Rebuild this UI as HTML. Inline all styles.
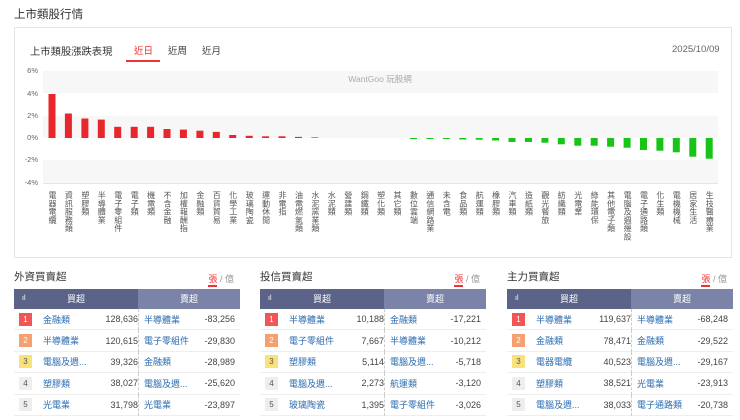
<!DOCTYPE html>
<html><head><meta charset="utf-8">
<style>
*{margin:0;padding:0;box-sizing:border-box}
body{width:740px;height:420px;background:#fff;font-family:"Liberation Sans","Noto Sans CJK TC",sans-serif;position:relative;overflow:hidden;color:#333}
.abs{position:absolute}
.title{left:14px;top:6px;font-size:11.5px;color:#333}
.card{left:14px;top:27px;width:718px;height:231px;border:1px solid #e4e4e4}
.lbl{position:absolute;top:191px;writing-mode:vertical-rl;font-size:8px;line-height:8px;color:#555;letter-spacing:0.3px;transform:translateX(-4px)}
.yl{position:absolute;left:22px;font-size:7.5px;color:#666;width:16px;text-align:right}
.tbl{position:absolute;top:269px;width:226px}
.tbl .h{font-size:10.5px;color:#333;height:19px;position:relative}
.tbl .u{position:absolute;right:6px;top:3px;font-size:9px;color:#999}
.tbl .u b{font-weight:normal;color:#e33;border-bottom:2px solid #e33;padding-bottom:1px}
.hd{height:20px;display:flex;font-size:9px;color:#fff;margin-top:1px}
.hd .a{width:124px;background:#5b6488;position:relative;text-align:center;line-height:20px}
.hd .b{flex:1;background:#7b84a8;text-align:center;line-height:20px}
.row{height:21.4px;display:flex;align-items:center;border-bottom:1px solid #eee;font-size:9px;position:relative}
.bd{width:13px;height:13px;margin-left:5px;font-size:8px;text-align:center;line-height:13px;color:#fff}
.n{color:#2a6bb0;position:absolute;left:29px}
.v{position:absolute;right:102px;color:#444}
.n2{color:#2a6bb0;position:absolute;left:130px}
.v2{position:absolute;right:5px;color:#444}
.row:after{content:"";position:absolute;left:124px;top:0;bottom:-1px;border-left:1px dashed #ccc}
</style></head><body>
<div class="abs title">上市類股行情</div>
<div class="abs card"></div>
<div class="abs" style="left:30px;top:43px;font-size:10.3px;color:#333">上市類股漲跌表現</div>
<div class="abs" style="left:134px;top:43px;font-size:9.5px;color:#e33">近日</div>
<div class="abs" style="left:126px;top:60px;width:34px;height:2px;background:#e33"></div>
<div class="abs" style="left:168px;top:43px;font-size:9.5px;color:#444">近周</div>
<div class="abs" style="left:202px;top:43px;font-size:9.5px;color:#444">近月</div>
<div class="abs" style="left:672px;top:44px;font-size:9.5px;color:#666">2025/10/09</div>
<div class="yl" style="top:66px">6%</div>
<div class="yl" style="top:89px">4%</div>
<div class="yl" style="top:111px">2%</div>
<div class="yl" style="top:133px">0%</div>
<div class="yl" style="top:155px">-2%</div>
<div class="yl" style="top:178px">-4%</div>
<svg class="abs" style="left:0;top:0" width="740" height="200">
<rect x="43" y="71" width="675" height="22" fill="#f7f7f7"/>
<rect x="43" y="116" width="675" height="22" fill="#f7f7f7"/>
<rect x="43" y="160" width="675" height="23" fill="#f7f7f7"/>
<line x1="43" y1="183.5" x2="718" y2="183.5" stroke="#e6e6e6"/>
<text x="380" y="82" font-size="8.5" fill="#aaa" text-anchor="middle" font-family="Liberation Sans,Noto Sans CJK TC,sans-serif">WantGoo 玩股網</text>
<g fill="#e8262b">
<rect x="48.5" y="94" width="7" height="44"/>
<rect x="64.9" y="113.5" width="7" height="24.5"/>
<rect x="81.4" y="118.5" width="7" height="19.5"/>
<rect x="97.8" y="119.6" width="7" height="18.4"/>
<rect x="114.2" y="126.8" width="7" height="11.2"/>
<rect x="130.7" y="126.8" width="7" height="11.2"/>
<rect x="147.1" y="126.8" width="7" height="11.2"/>
<rect x="163.5" y="129" width="7" height="9"/>
<rect x="179.9" y="129.6" width="7" height="8.4"/>
<rect x="196.4" y="130.7" width="7" height="7.3"/>
<rect x="212.8" y="131.9" width="7" height="6.1"/>
<rect x="229.2" y="135" width="7" height="3"/>
<rect x="245.7" y="135.8" width="7" height="2.2"/>
<rect x="262.1" y="136.3" width="7" height="1.7"/>
<rect x="278.5" y="136.3" width="7" height="1.7"/>
<rect x="295" y="136.9" width="7" height="1.1"/>
<rect x="311.4" y="137.4" width="7" height="0.6"/>
</g>
<g fill="#18c418">
<rect x="410" y="138" width="7" height="1"/>
<rect x="426.4" y="138" width="7" height="1"/>
<rect x="442.8" y="138" width="7" height="1"/>
<rect x="459.3" y="138" width="7" height="1.5"/>
<rect x="475.7" y="138" width="7" height="1.7"/>
<rect x="492.1" y="138" width="7" height="2.5"/>
<rect x="508.5" y="138" width="7" height="4"/>
<rect x="525" y="138" width="7" height="4"/>
<rect x="541.4" y="138" width="7" height="4.7"/>
<rect x="557.8" y="138" width="7" height="6.3"/>
<rect x="574.3" y="138" width="7" height="7.7"/>
<rect x="590.7" y="138" width="7" height="7.7"/>
<rect x="607.1" y="138" width="7" height="8.7"/>
<rect x="623.6" y="138" width="7" height="9.7"/>
<rect x="640" y="138" width="7" height="12"/>
<rect x="656.4" y="138" width="7" height="12.7"/>
<rect x="672.8" y="138" width="7" height="14.3"/>
<rect x="689.3" y="138" width="7" height="18.7"/>
<rect x="705.7" y="138" width="7" height="20.7"/>
</g>
</svg>
<div class="lbl" style="left:52px">電器電纜</div>
<div class="lbl" style="left:68.4px">資訊服務類</div>
<div class="lbl" style="left:84.9px">塑膠類</div>
<div class="lbl" style="left:101.3px">半導體業</div>
<div class="lbl" style="left:117.7px">電子零組件</div>
<div class="lbl" style="left:134.2px">電子類</div>
<div class="lbl" style="left:150.6px">機電類</div>
<div class="lbl" style="left:167px">不含金融</div>
<div class="lbl" style="left:183.4px">加權報酬指</div>
<div class="lbl" style="left:199.9px">金融類</div>
<div class="lbl" style="left:216.3px">百貨貿易</div>
<div class="lbl" style="left:232.7px">化學工業</div>
<div class="lbl" style="left:249.2px">玻璃陶瓷</div>
<div class="lbl" style="left:265.6px">運動休閒</div>
<div class="lbl" style="left:282px">非電指</div>
<div class="lbl" style="left:298.5px">油電燃氣類</div>
<div class="lbl" style="left:314.9px">水泥窯業類</div>
<div class="lbl" style="left:331.3px">水泥類</div>
<div class="lbl" style="left:347.7px">營建類</div>
<div class="lbl" style="left:364.2px">鋼鐵類</div>
<div class="lbl" style="left:380.6px">塑化類</div>
<div class="lbl" style="left:397px">其它類</div>
<div class="lbl" style="left:413.5px">數位雲端</div>
<div class="lbl" style="left:429.9px">通信網路業</div>
<div class="lbl" style="left:446.3px">未含電</div>
<div class="lbl" style="left:462.8px">食品類</div>
<div class="lbl" style="left:479.2px">航運類</div>
<div class="lbl" style="left:495.6px">橡膠類</div>
<div class="lbl" style="left:512px">汽車類</div>
<div class="lbl" style="left:528.5px">造紙類</div>
<div class="lbl" style="left:544.9px">觀光餐旅</div>
<div class="lbl" style="left:561.3px">紡織類</div>
<div class="lbl" style="left:577.8px">光電業</div>
<div class="lbl" style="left:594.2px">綠能環保</div>
<div class="lbl" style="left:610.6px">其他電子類</div>
<div class="lbl" style="left:627.1px">電腦及週邊設</div>
<div class="lbl" style="left:643.5px">電子通路類</div>
<div class="lbl" style="left:659.9px">化生類</div>
<div class="lbl" style="left:676.3px">電機機械</div>
<div class="lbl" style="left:692.8px">居家生活</div>
<div class="lbl" style="left:709.2px">生技醫療業</div>

<div class="tbl" style="left:14px">
<div class="h">外資買賣超<span class="u"><b>張</b> / 億</span></div>
<div class="hd"><div class="a"><span style="position:absolute;left:8px;font-size:7px">ıl</span>買超</div><div class="b">賣超</div></div>
<div class="row"><div class="bd" style="background:#f05656">1</div><span class="n">金融類</span><span class="v">128,636</span><span class="n2">半導體業</span><span class="v2">-83,256</span></div>
<div class="row"><div class="bd" style="background:#f5a070">2</div><span class="n">半導體業</span><span class="v">120,615</span><span class="n2">電子零組件</span><span class="v2">-29,830</span></div>
<div class="row"><div class="bd" style="background:#f9e27a;color:#555">3</div><span class="n">電腦及週...</span><span class="v">39,326</span><span class="n2">金融類</span><span class="v2">-28,989</span></div>
<div class="row"><div class="bd" style="background:#eee;color:#555">4</div><span class="n">塑膠類</span><span class="v">38,027</span><span class="n2">電腦及週...</span><span class="v2">-25,620</span></div>
<div class="row"><div class="bd" style="background:#eee;color:#555">5</div><span class="n">光電業</span><span class="v">31,798</span><span class="n2">光電業</span><span class="v2">-23,897</span></div>
</div>

<div class="tbl" style="left:260px">
<div class="h">投信買賣超<span class="u"><b>張</b> / 億</span></div>
<div class="hd"><div class="a"><span style="position:absolute;left:8px;font-size:7px">ıl</span>買超</div><div class="b">賣超</div></div>
<div class="row"><div class="bd" style="background:#f05656">1</div><span class="n">半導體業</span><span class="v">10,188</span><span class="n2">金融類</span><span class="v2">-17,221</span></div>
<div class="row"><div class="bd" style="background:#f5a070">2</div><span class="n">電子零組件</span><span class="v">7,667</span><span class="n2">半導體業</span><span class="v2">-10,212</span></div>
<div class="row"><div class="bd" style="background:#f9e27a;color:#555">3</div><span class="n">塑膠類</span><span class="v">5,114</span><span class="n2">電腦及週...</span><span class="v2">-5,718</span></div>
<div class="row"><div class="bd" style="background:#eee;color:#555">4</div><span class="n">電腦及週...</span><span class="v">2,273</span><span class="n2">航運類</span><span class="v2">-3,120</span></div>
<div class="row"><div class="bd" style="background:#eee;color:#555">5</div><span class="n">玻璃陶瓷</span><span class="v">1,395</span><span class="n2">電子零組件</span><span class="v2">-3,026</span></div>
</div>

<div class="tbl" style="left:507px">
<div class="h">主力買賣超<span class="u"><b>張</b> / 億</span></div>
<div class="hd"><div class="a"><span style="position:absolute;left:8px;font-size:7px">ıl</span>買超</div><div class="b">賣超</div></div>
<div class="row"><div class="bd" style="background:#f05656">1</div><span class="n">半導體業</span><span class="v">119,637</span><span class="n2">半導體業</span><span class="v2">-68,248</span></div>
<div class="row"><div class="bd" style="background:#f5a070">2</div><span class="n">金融類</span><span class="v">78,471</span><span class="n2">金融類</span><span class="v2">-29,522</span></div>
<div class="row"><div class="bd" style="background:#f9e27a;color:#555">3</div><span class="n">電器電纜</span><span class="v">40,523</span><span class="n2">電腦及週...</span><span class="v2">-29,167</span></div>
<div class="row"><div class="bd" style="background:#eee;color:#555">4</div><span class="n">塑膠類</span><span class="v">38,521</span><span class="n2">光電業</span><span class="v2">-23,913</span></div>
<div class="row"><div class="bd" style="background:#eee;color:#555">5</div><span class="n">電腦及週...</span><span class="v">38,033</span><span class="n2">電子通路類</span><span class="v2">-20,738</span></div>
</div>
</body></html>
